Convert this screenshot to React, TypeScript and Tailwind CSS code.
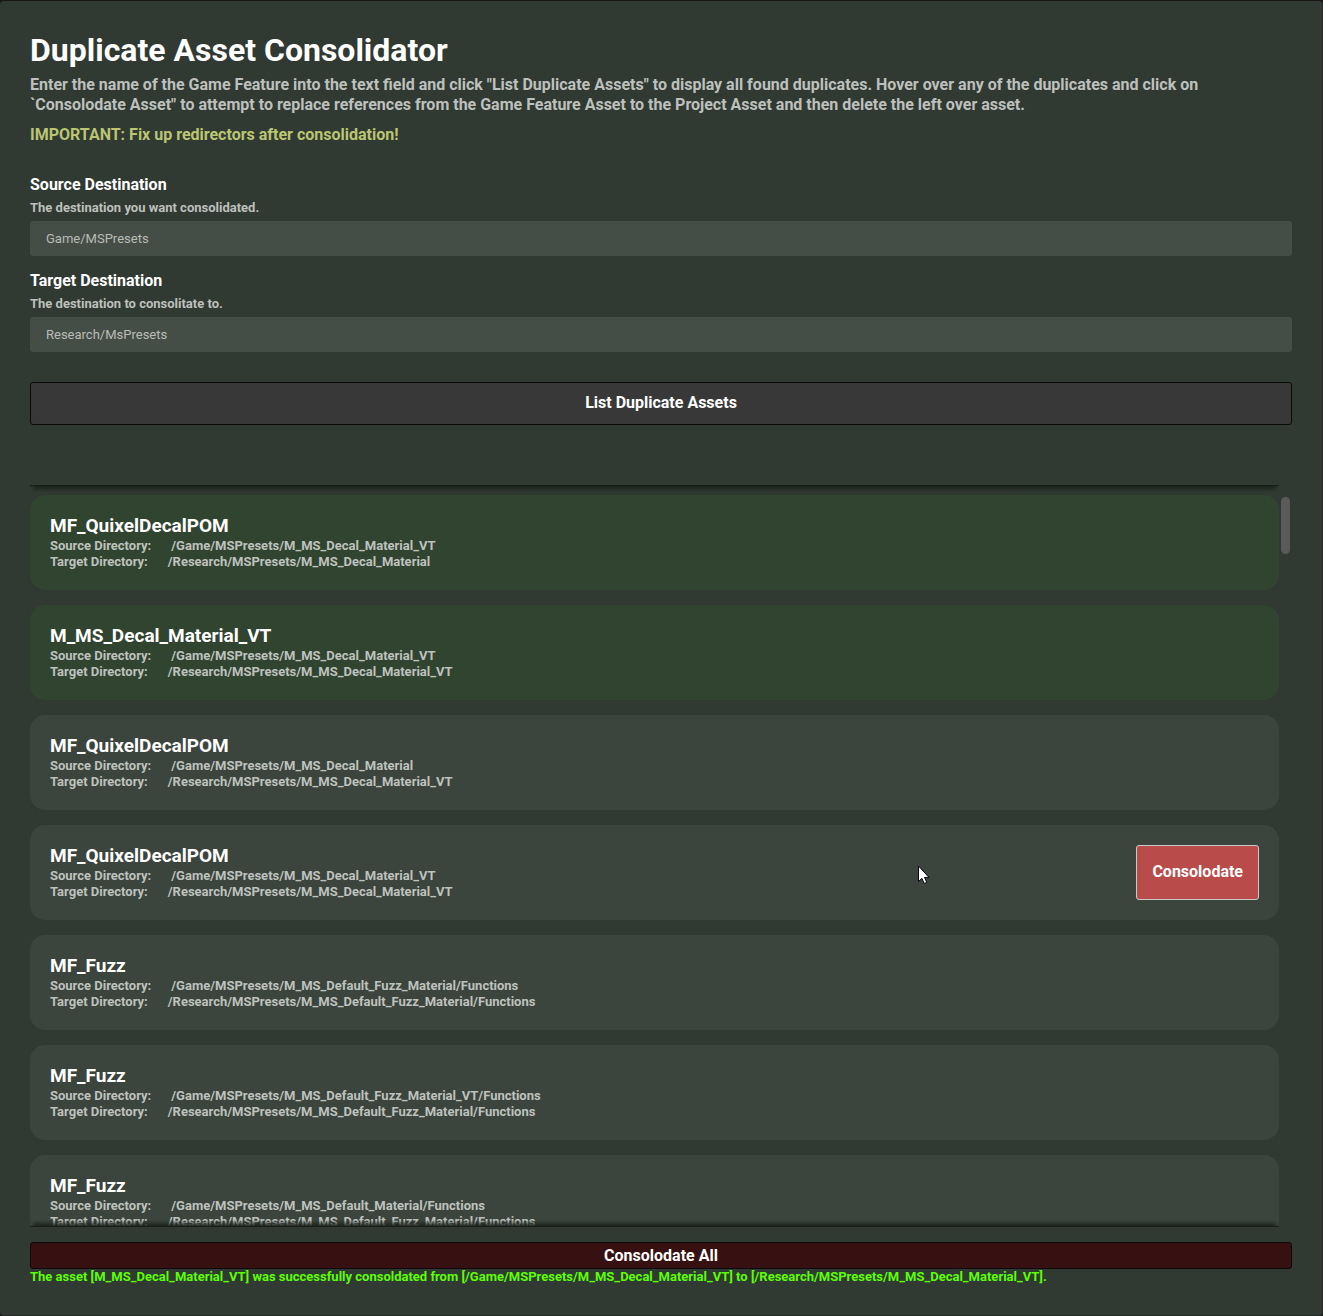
type Asset = {
  name: string;
  source: string;
  target: string;
  done?: boolean;
  active?: boolean;
};

const assets: Asset[] = [
  { name: "MF_QuixelDecalPOM", source: "/Game/MSPresets/M_MS_Decal_Material_VT", target: "/Research/MSPresets/M_MS_Decal_Material", done: true },
  { name: "M_MS_Decal_Material_VT", source: "/Game/MSPresets/M_MS_Decal_Material_VT", target: "/Research/MSPresets/M_MS_Decal_Material_VT", done: true },
  { name: "MF_QuixelDecalPOM", source: "/Game/MSPresets/M_MS_Decal_Material", target: "/Research/MSPresets/M_MS_Decal_Material_VT" },
  { name: "MF_QuixelDecalPOM", source: "/Game/MSPresets/M_MS_Decal_Material_VT", target: "/Research/MSPresets/M_MS_Decal_Material_VT", active: true },
  { name: "MF_Fuzz", source: "/Game/MSPresets/M_MS_Default_Fuzz_Material/Functions", target: "/Research/MSPresets/M_MS_Default_Fuzz_Material/Functions" },
  { name: "MF_Fuzz", source: "/Game/MSPresets/M_MS_Default_Fuzz_Material_VT/Functions", target: "/Research/MSPresets/M_MS_Default_Fuzz_Material/Functions" },
  { name: "MF_Fuzz", source: "/Game/MSPresets/M_MS_Default_Material/Functions", target: "/Research/MSPresets/M_MS_Default_Fuzz_Material/Functions" },
];

function Field({ id, label, hint, value }: { id: string; label: string; hint: string; value: string }) {
  return (
    <div className="flex flex-col">
      <label htmlFor={id} className="text-[16px] leading-5 text-white">{label}</label>
      <p id={`${id}-hint`} className="mt-1 text-[13px] leading-[18px] text-[#bdc0bd]">{hint}</p>
      <input
        id={id}
        type="text"
        defaultValue={value}
        aria-describedby={`${id}-hint`}
        className="mt-1 h-[35px] w-full rounded-[3px] bg-[#454e46] px-4 text-[13px] font-normal text-[#b9bcb9] outline-none"
      />
    </div>
  );
}

function PathRow({ label, path }: { label: string; path: string }) {
  return (
    <div className="flex gap-5 text-[13px] leading-4 text-[#bec2be]">
      <dt>{label}</dt>
      <dd>{path}</dd>
    </div>
  );
}

function Pointer() {
  return (
    <svg className="pointer-events-none absolute top-10 right-[349px]" width="13" height="20" viewBox="0 0 13 20" aria-hidden="true">
      <path d="M1.5 1v15.6l3.4-3.3 2.3 5.2 2.6-1.1-2.3-5h4.5z" fill="#fff" stroke="#05070f" strokeWidth="1" />
    </svg>
  );
}

function AssetCard({ asset }: { asset: Asset }) {
  return (
    <li className={`relative flex shrink-0 items-stretch justify-between rounded-[15px] p-5 ${asset.done ? "bg-[#314430]" : "bg-[#3b443d]"}`}>
      <div className="min-h-[55px]">
        <h2 className="mb-[2px] text-[19px] leading-[21px] text-white">{asset.name}</h2>
        <dl>
          <PathRow label="Source Directory:" path={asset.source} />
          <PathRow label="Target Directory:" path={asset.target} />
        </dl>
      </div>
      {asset.active && (
        <>
          <button type="button" className="rounded-[3px] border border-[#c9c9c9] bg-[#b94b4b] px-[15px] pb-px text-[16px] leading-5 text-white">
            Consolodate
          </button>
          <Pointer />
        </>
      )}
    </li>
  );
}

export default function App() {
  return (
    <div className="h-screen bg-[#181818] pt-px font-['Roboto',sans-serif] font-bold">
      <main className="flex h-full flex-col rounded-[4px] border-r border-b border-[#262c28] bg-[#303932] px-[30px] pt-[29px] pb-[30px]">
        <h1 className="text-[32px] leading-10 text-white">Duplicate Asset Consolidator</h1>
        <p className="mt-[5px] text-[16px] leading-5 text-[#bdc0bd]">
          Enter the name of the Game Feature into the text field and click "List Duplicate Assets" to display all found duplicates. Hover over any of the duplicates and click on `Consolodate Asset" to attempt to replace references from the Game Feature Asset to the Project Asset and then delete the left over asset.
        </p>
        <p className="mt-[10px] text-[16px] leading-5 text-[#bbc572]">IMPORTANT: Fix up redirectors after consolidation!</p>

        <form className="mt-[30px] flex flex-col gap-[15px]">
          <Field id="source" label="Source Destination" hint="The destination you want consolidated." value="Game/MSPresets" />
          <Field id="target" label="Target Destination" hint="The destination to consolitate to." value="Research/MsPresets" />
          <button type="button" className="mt-[15px] h-[43px] rounded-[3px] border border-[#0a0a0a] bg-[#383838] pb-[2px] text-[16px] leading-5 text-white">
            List Duplicate Assets
          </button>
        </form>

        <section aria-label="Duplicate assets" className="mt-[60px] flex min-h-0 flex-1 gap-[2px]">
          <div className="relative min-w-0 flex-1">
            <ul className="flex h-full flex-col gap-[15px] overflow-y-auto pt-[10px] [scrollbar-width:none]">
              {assets.map((asset, i) => (
                <AssetCard key={i} asset={asset} />
              ))}
            </ul>
            <div className="pointer-events-none absolute inset-x-0 top-0 border-t border-[#141e15]">
              <div className="h-[6px] bg-linear-to-b from-[#1a231b] to-transparent mask-x-from-[calc(100%-6px)]" />
            </div>
            <div className="pointer-events-none absolute inset-x-0 bottom-0 border-b border-[#181e1a]">
              <div className="h-[6px] bg-linear-to-t from-[#1e2520] to-transparent mask-x-from-[calc(100%-6px)]" />
            </div>
          </div>
          <div className="mt-3 mr-[2px] h-[57px] w-[9px] rounded-full bg-[#5a5a5a]" />
        </section>

        <button type="button" className="mt-[15px] h-[27px] shrink-0 rounded-[3px] border border-[#0b0b0b] bg-[#371111] text-[16px] leading-5 text-white">
          Consolodate All
        </button>
        <p role="status" className="text-[13px] leading-4 text-[#5dff00]">
          The asset [M_MS_Decal_Material_VT] was successfully consoldated from [/Game/MSPresets/M_MS_Decal_Material_VT] to [/Research/MSPresets/M_MS_Decal_Material_VT].
        </p>
      </main>
    </div>
  );
}
